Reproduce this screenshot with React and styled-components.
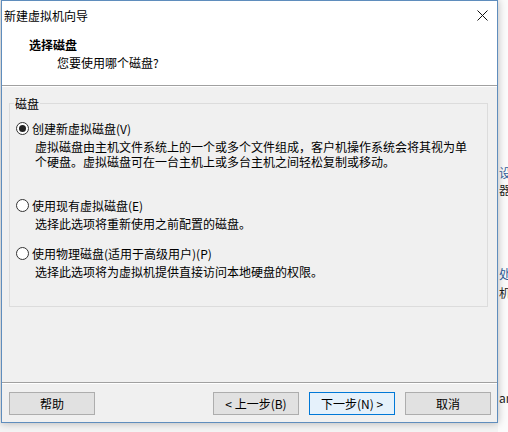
import React from "react";
import styled, { createGlobalStyle } from "styled-components";

const GlobalStyle = createGlobalStyle`
  html, body {
    margin: 0;
    padding: 0;
    background: #f4f4f4;
  }
  * {
    box-sizing: border-box;
  }
`;

const FONT = `"Noto Sans CJK SC", "Noto Sans", sans-serif`;

const Desktop = styled.div`
  position: relative;
  width: 508px;
  height: 432px;
  overflow: hidden;
  background: #f4f4f4;
  padding-left: 1px;
  font-family: ${FONT};
  font-size: 12px;
  color: #000;
`;

// bits of the main window that peek out behind the dialog
const BackWindow = styled.div`
  position: absolute;
  left: 498px;
  top: 0;
  width: 10px;
  height: 432px;
  overflow: hidden;
  background: #fbfbfb;
`;

const BackText = styled.span`
  position: absolute;
  left: 1px;
  top: ${(p) => p.top}px;
  color: ${(p) => p.color || "#222"};
  line-height: 15px;
  white-space: nowrap;
`;

const Dialog = styled.div`
  position: relative;
  width: 497px;
  height: 423px;
  display: flex;
  flex-direction: column;
  border: 1px solid #5f8dbd;
  background: #f0f0f0;
  box-shadow: 0 0 8px rgba(0, 0, 0, 0.28);
`;

const TitleBar = styled.div`
  height: 29px;
  display: flex;
  align-items: center;
  justify-content: space-between;
  padding: 0 9px 0 2px;
  background: #fff;
  line-height: 15px;
`;

const CloseIcon = () => (
  <svg width="11" height="11" viewBox="0 0 11 11">
    <path d="M0.5 0.5 L10.5 10.5 M10.5 0.5 L0.5 10.5" stroke="#111" strokeWidth="1" fill="none" />
  </svg>
);

const Header = styled.div`
  height: 56px;
  padding: 7px 0 0 27px;
  background: #fff;
  border-bottom: 1px solid #a0a0a0;
`;

const HeaderTitle = styled.div`
  font-weight: bold;
  line-height: 15px;
`;

const HeaderSub = styled.div`
  margin: 3px 0 0 28px;
  line-height: 15px;
`;

const Body = styled.div`
  flex: 1;
  border-top: 1px solid #fff;
  padding: 9px 9px 0 7px;
`;

const Group = styled.fieldset`
  margin: 0;
  padding: 0;
  height: 211px;
  border: 1px solid #dcdcdc;
`;

const GroupLabel = styled.legend`
  margin-left: 4px;
  padding: 0 1px;
  line-height: 15px;
`;

const Option = styled.div`
  margin-top: ${(p) => p.gap}px;
`;

const OptionRow = styled.label`
  display: flex;
  align-items: center;
  padding-left: 6px;
  line-height: 15px;
`;

const Radio = styled.span`
  width: 13px;
  height: 13px;
  margin-right: 3px;
  border: 1px solid #333;
  border-radius: 50%;
  background: #fff;
  display: flex;
  align-items: center;
  justify-content: center;

  &::after {
    content: "";
    width: 7px;
    height: 7px;
    border-radius: 50%;
    background: ${(p) => (p.checked ? "#222" : "transparent")};
  }
`;

const OptionDesc = styled.div`
  margin: 3px 0 0 25px;
  line-height: 15px;
  width: 440px;
`;

const Footer = styled.div`
  height: 40px;
  display: flex;
  align-items: flex-start;
  gap: 10px;
  padding: 9px 6px 0 7px;
  border-top: 1px solid #a0a0a0;
  box-shadow: inset 0 1px 0 #fff;
`;

const Spacer = styled.div`
  flex: 1;
`;

const Button = styled.button`
  width: 86px;
  height: 23px;
  padding: 0;
  font-family: ${FONT};
  font-size: 12px;
  line-height: 15px;
  color: #000;
  background: ${(p) => (p.primary ? "#e5f1fb" : "#e1e1e1")};
  border: 1px solid ${(p) => (p.primary ? "#0078d7" : "#adadad")};
  border-radius: 0;
`;

const options = [
  {
    label: "创建新虚拟磁盘(V)",
    desc: "虚拟磁盘由主机文件系统上的一个或多个文件组成，客户机操作系统会将其视为单个硬盘。虚拟磁盘可在一台主机上或多台主机之间轻松复制或移动。",
    checked: true,
    gap: 10,
  },
  {
    label: "使用现有虚拟磁盘(E)",
    desc: "选择此选项将重新使用之前配置的磁盘。",
    gap: 29,
  },
  {
    label: "使用物理磁盘(适用于高级用户)(P)",
    desc: "选择此选项将为虚拟机提供直接访问本地硬盘的权限。",
    gap: 15,
  },
];

export default function App() {
  return (
    <Desktop>
      <GlobalStyle />
      <BackWindow aria-hidden="true">
        <BackText top={165} color="#2f5d9a">设备</BackText>
        <BackText top={182}>器</BackText>
        <BackText top={266} color="#2f5d9a">处理</BackText>
        <BackText top={285}>机</BackText>
        <BackText top={390}>ar</BackText>
      </BackWindow>
      <Dialog>
        <TitleBar>
          <span>新建虚拟机向导</span>
          <CloseIcon />
        </TitleBar>
        <Header>
          <HeaderTitle>选择磁盘</HeaderTitle>
          <HeaderSub>您要使用哪个磁盘?</HeaderSub>
        </Header>
        <Body>
          <Group>
            <GroupLabel>磁盘</GroupLabel>
            {options.map((o) => (
              <Option key={o.label} gap={o.gap}>
                <OptionRow>
                  <Radio checked={o.checked} />
                  {o.label}
                </OptionRow>
                <OptionDesc>{o.desc}</OptionDesc>
              </Option>
            ))}
          </Group>
        </Body>
        <Footer>
          <Button>帮助</Button>
          <Spacer />
          <Button>&lt; 上一步(B)</Button>
          <Button primary>下一步(N) &gt;</Button>
          <Button>取消</Button>
        </Footer>
      </Dialog>
    </Desktop>
  );
}
